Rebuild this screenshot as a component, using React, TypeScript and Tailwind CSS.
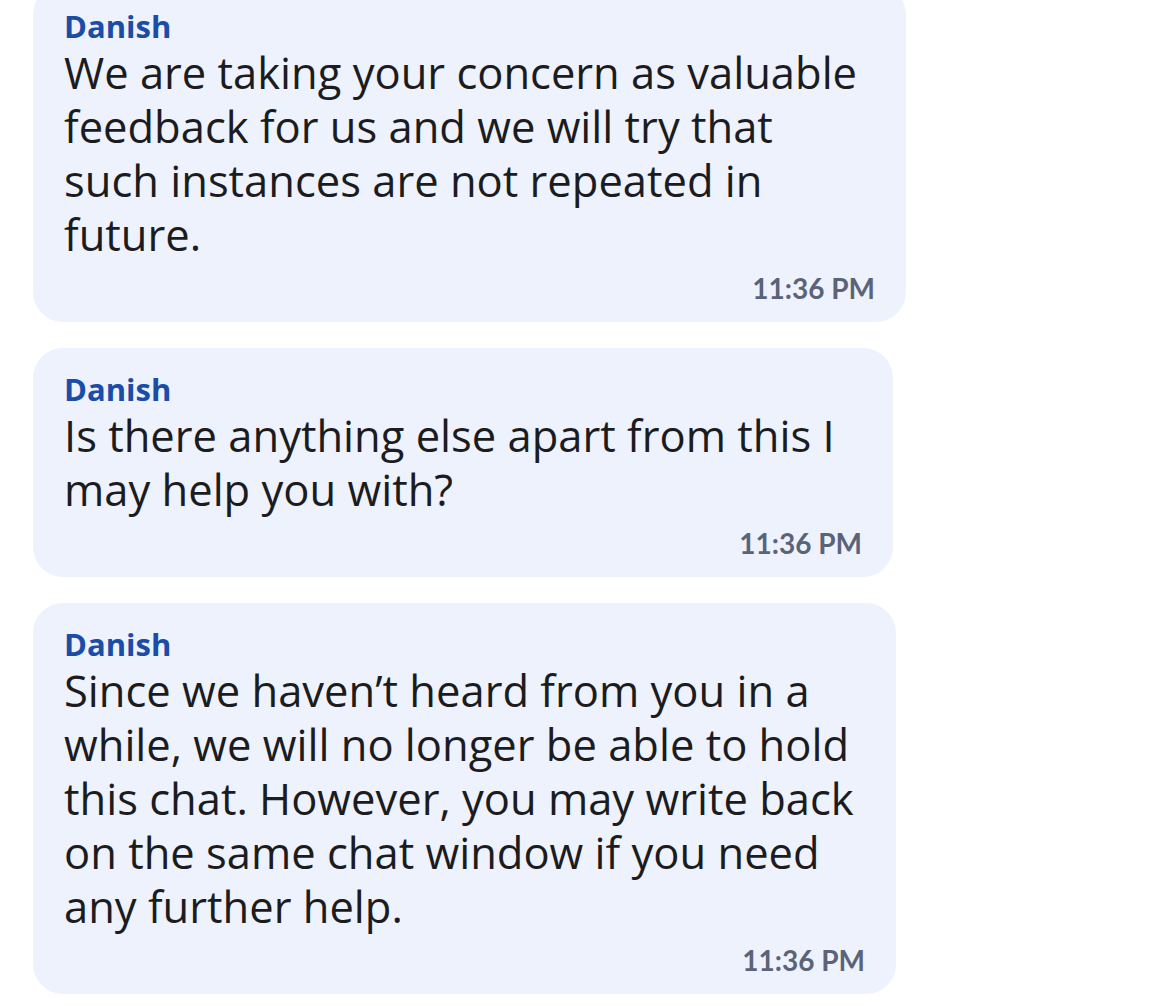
import React from "react";

type Msg = {
  width: string;
  lines: string[];
};

const messages: Msg[] = [
  {
    width: "w-[873px]",
    lines: [
      "We are taking your concern as valuable",
      "feedback for us and we will try that",
      "such instances are not repeated in",
      "future.",
    ],
  },
  {
    width: "w-[860px]",
    lines: ["Is there anything else apart from this I", "may help you with?"],
  },
  {
    width: "w-[863px]",
    lines: [
      "Since we haven’t heard from you in a",
      "while, we will no longer be able to hold",
      "this chat. However, you may write back",
      "on the same chat window if you need",
      "any further help.",
    ],
  },
];

function Bubble({ msg }: { msg: Msg }) {
  return (
    <div className={`${msg.width} rounded-[30px] bg-[#EDF2FD] pt-[22px] pb-[16px] px-[31px]`}>
      <div className="font-['Open_Sans',sans-serif] text-[31px] leading-[39px] font-bold text-[#1A4DA8]">
        Danish
      </div>
      <div className="font-['Open_Sans',sans-serif] text-[43.5px] leading-[54px] text-[#1c1c1e]">
        {msg.lines.map((l, i) => (
          <div key={i} className="whitespace-nowrap">
            {l}
          </div>
        ))}
      </div>
      <div className="mt-[8px] text-right font-['Lato',sans-serif] text-[28px] leading-[36px] font-bold text-[#5B6378]">
        11:36 PM
      </div>
    </div>
  );
}

export default function App() {
  return (
    <div className="h-[1006px] overflow-hidden bg-white">
      <div className="-mt-[15px] flex flex-col gap-[26px] pl-[33px]">
        {messages.map((m, i) => (
          <Bubble key={i} msg={m} />
        ))}
      </div>
    </div>
  );
}
